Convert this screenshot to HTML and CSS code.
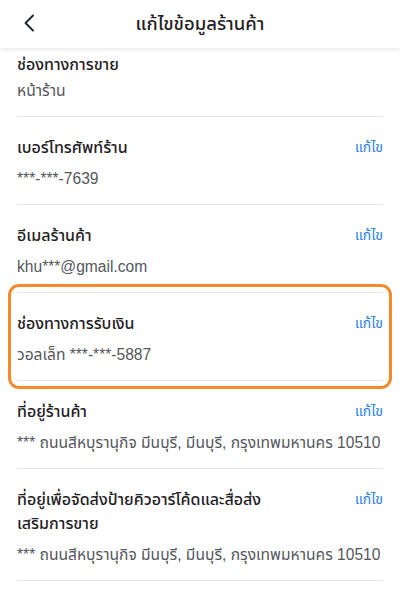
FILE: index.html
```html
<!DOCTYPE html>
<html lang="th">
<head>
<meta charset="utf-8">
<link rel="stylesheet" href="styles.css">
</head>
<body>
<header class="topbar">
  <button class="back" aria-label="back">
    <svg width="12" height="18" viewBox="0 0 12 18"><path d="M10 1.5 L2.5 9 L10 16.5" fill="none" stroke="#1f2333" stroke-width="1.9" stroke-linecap="round" stroke-linejoin="round"/></svg>
  </button>
  <h1 class="title">แก้ไขข้อมูลร้านค้า</h1>
</header>
<main class="list">
  <section class="item first">
    <div class="inner">
      <div class="text">
        <div class="label">ช่องทางการขาย</div>
        <div class="value">หน้าร้าน</div>
      </div>
    </div>
  </section>
  <section class="item">
    <div class="inner">
      <div class="text">
        <div class="label">เบอร์โทรศัพท์ร้าน</div>
        <div class="value">***-***-7639</div>
      </div>
      <a class="edit">แก้ไข</a>
    </div>
  </section>
  <section class="item">
    <div class="inner">
      <div class="text">
        <div class="label">อีเมลร้านค้า</div>
        <div class="value">khu***@gmail.com</div>
      </div>
      <a class="edit">แก้ไข</a>
    </div>
  </section>
  <section class="item highlight">
    <div class="inner">
      <div class="text">
        <div class="label">ช่องทางการรับเงิน</div>
        <div class="value">วอลเล็ท ***-***-5887</div>
      </div>
      <a class="edit">แก้ไข</a>
    </div>
  </section>
  <section class="item">
    <div class="inner">
      <div class="text">
        <div class="label">ที่อยู่ร้านค้า</div>
        <div class="value">*** ถนนสีหบุรานุกิจ มีนบุรี, มีนบุรี, กรุงเทพมหานคร 10510</div>
      </div>
      <a class="edit">แก้ไข</a>
    </div>
  </section>
  <section class="item">
    <div class="inner">
      <div class="text">
        <div class="label">ที่อยู่เพื่อจัดส่งป้ายคิวอาร์โค้ดและสื่อส่ง<br>เสริมการขาย</div>
        <div class="value">*** ถนนสีหบุรานุกิจ มีนบุรี, มีนบุรี, กรุงเทพมหานคร 10510</div>
      </div>
      <a class="edit">แก้ไข</a>
    </div>
  </section>
</main>
</body>
</html>
```
FILE: styles.css
```css
html, body {
  margin: 0;
  padding: 0;
  background: #ffffff;
}
body {
  width: 400px;
  height: 600px;
  overflow: hidden;
  font-family: "Liberation Sans", "Noto Sans Thai", "Noto Sans", sans-serif;
  color: #1f2125;
}
.topbar {
  position: relative;
  z-index: 2;
  height: 48px;
  display: flex;
  align-items: center;
  justify-content: center;
  background: #fff;
  box-shadow: 0 2px 4px rgba(0,0,0,0.08);
}
.back {
  position: absolute;
  left: 17px;
  top: 11px;
  width: 24px;
  height: 24px;
  border: 0;
  background: none;
  padding: 0;
  display: flex;
  align-items: center;
  justify-content: center;
}
.title {
  margin: 0;
  font-size: 18.5px;
  font-weight: 500;
  color: #1f2125;
}
.list {
  display: flex;
  flex-direction: column;
}
.item {
  position: relative;
  padding: 0 17px;
}
.inner {
  display: flex;
  justify-content: space-between;
  align-items: flex-start;
  padding: 19px 0 14px;
  border-bottom: 1px solid #e6e6e8;
}
.item.first .inner {
  padding-top: 5px;
}
.text {
  display: flex;
  flex-direction: column;
  gap: 8px;
  min-width: 0;
}
.item.first .text {
  gap: 3px;
}
.label {
  font-size: 16px;
  font-weight: 500;
  line-height: 24px;
  color: #1f2125;
}
.value {
  font-size: 15.6px;
  line-height: 22px;
  color: #55575c;
  white-space: nowrap;
}
.edit {
  font-size: 14px;
  line-height: 22px;
  color: #2a7ff0;
  flex-shrink: 0;
  margin-left: 12px;
}
.highlight::after {
  content: "";
  position: absolute;
  left: 8px;
  right: 8px;
  top: -9px;
  bottom: -8px;
  border: 3px solid #f7892b;
  border-radius: 11px;
  pointer-events: none;
}
```
